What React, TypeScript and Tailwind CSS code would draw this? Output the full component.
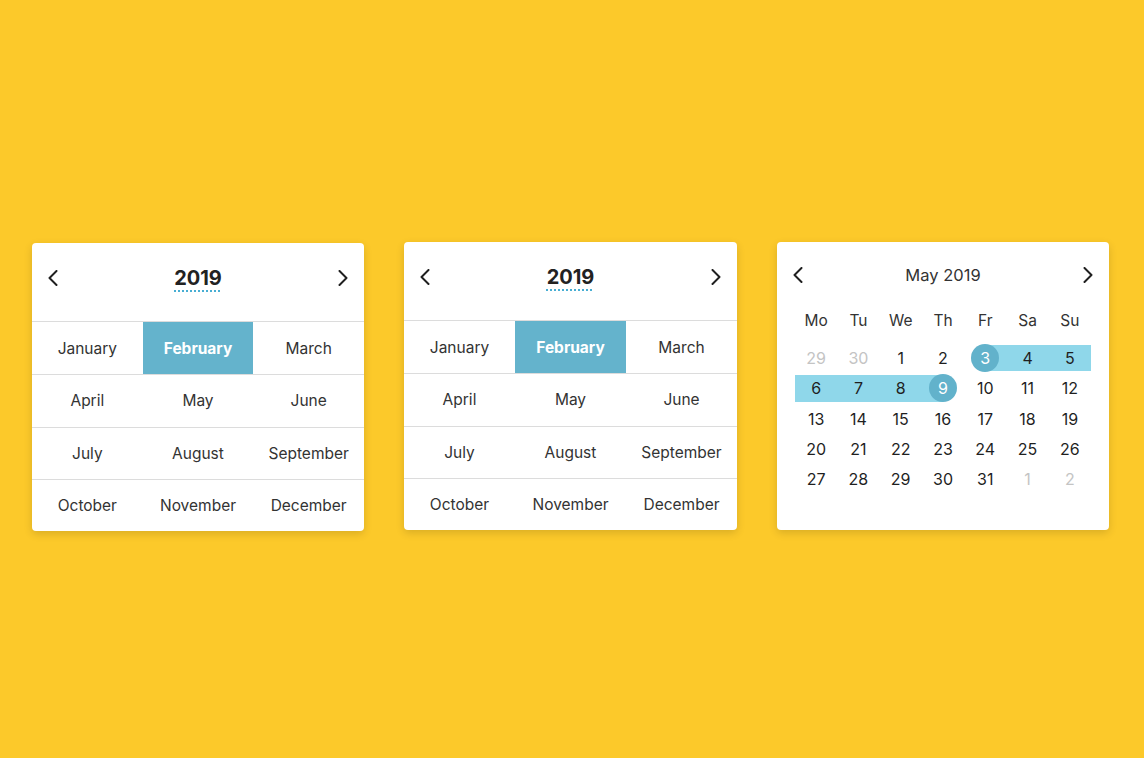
import React from 'react';

const MONTHS = [
    'January', 'February', 'March',
    'April', 'May', 'June',
    'July', 'August', 'September',
    'October', 'November', 'December',
];

const WEEKDAYS = ['Mo', 'Tu', 'We', 'Th', 'Fr', 'Sa', 'Su'];

type Day = { n: number; muted?: boolean };

// May 2019, weeks starting on Monday
const WEEKS: Day[][] = [
    [{ n: 29, muted: true }, { n: 30, muted: true }, { n: 1 }, { n: 2 }, { n: 3 }, { n: 4 }, { n: 5 }],
    [{ n: 6 }, { n: 7 }, { n: 8 }, { n: 9 }, { n: 10 }, { n: 11 }, { n: 12 }],
    [{ n: 13 }, { n: 14 }, { n: 15 }, { n: 16 }, { n: 17 }, { n: 18 }, { n: 19 }],
    [{ n: 20 }, { n: 21 }, { n: 22 }, { n: 23 }, { n: 24 }, { n: 25 }, { n: 26 }],
    [{ n: 27 }, { n: 28 }, { n: 29 }, { n: 30 }, { n: 31 }, { n: 1, muted: true }, { n: 2, muted: true }],
];

const RANGE_START = 3;
const RANGE_END = 9;

const Chevron: React.FC<{ dir: 'left' | 'right' }> = ({ dir }) => (
    <svg width="10" height="16" viewBox="0 0 10 16" fill="none" className="shrink-0">
        <path
            d={dir === 'left' ? 'M8.5 1 L1.5 8 L8.5 15' : 'M1.5 1 L8.5 8 L1.5 15'}
            stroke="#1f1f1f"
            strokeWidth="2"
            strokeLinecap="round"
            strokeLinejoin="round"
        />
    </svg>
);

const Card: React.FC<{ className?: string; children: React.ReactNode }> = ({ className = '', children }) => (
    <div className={`bg-white rounded-[4px] shadow-[0_3px_8px_rgba(0,0,0,0.14)] overflow-hidden ${className}`}>
        {children}
    </div>
);

const MonthPicker: React.FC<{ className?: string }> = ({ className }) => (
    <Card className={className}>
        <div className="h-[79px] pb-[8px] flex items-center justify-between px-[12px] border-b border-[#dcdcdc]">
            <button className="p-1">
                <Chevron dir="left" />
            </button>
            <span className="text-[20px] font-bold text-[#222] leading-none underline decoration-dotted decoration-2 decoration-[#48aed3] underline-offset-[5px]">
                2019
            </span>
            <button className="p-1">
                <Chevron dir="right" />
            </button>
        </div>
        <div className="grid grid-cols-3">
            {MONTHS.map((m, i) => {
                const selected = m === 'February';
                return (
                    <div
                        key={m}
                        className={`h-[52.25px] flex items-center justify-center text-[15.5px] ${
                            i >= 3 ? 'border-t border-[#dcdcdc]' : ''
                        } ${selected ? 'bg-[#64b3cc] text-white font-bold' : 'text-[#333]'}`}
                    >
                        {m}
                    </div>
                );
            })}
        </div>
    </Card>
);

const DayCell: React.FC<{ day: Day }> = ({ day }) => {
    const inMonth = !day.muted;
    const isStart = inMonth && day.n === RANGE_START;
    const isEnd = inMonth && day.n === RANGE_END;
    const inRange = inMonth && day.n > RANGE_START && day.n < RANGE_END;

    return (
        <div className="relative h-[30.3px] flex items-center justify-center">
            {inRange && <div className="absolute inset-x-0 top-[2px] bottom-[2px] bg-[#8fd7ea]" />}
            {isStart && <div className="absolute left-1/2 right-0 top-[2px] bottom-[2px] bg-[#8fd7ea]" />}
            {isEnd && <div className="absolute left-0 right-1/2 top-[2px] bottom-[2px] bg-[#8fd7ea]" />}
            {(isStart || isEnd) && (
                <div className="absolute left-1/2 top-1/2 -translate-x-1/2 -translate-y-1/2 w-[28px] h-[28px] rounded-full bg-[#62b2cb]" />
            )}
            <span
                className={`relative text-[16px] ${
                    isStart || isEnd ? 'text-white' : day.muted ? 'text-[#c4c4c4]' : 'text-[#1f1f1f]'
                }`}
            >
                {day.n}
            </span>
        </div>
    );
};

const DayPicker: React.FC = () => (
    <Card className="w-[332px] px-[18px] pt-[20px] pb-[36px]">
        <div className="h-[26px] flex items-center justify-between -mx-[6px]">
            <button className="p-1">
                <Chevron dir="left" />
            </button>
            <span className="text-[16.5px] text-[#333]">May 2019</span>
            <button className="p-1">
                <Chevron dir="right" />
            </button>
        </div>
        <div className="grid grid-cols-7 mt-[18px] h-[30px] items-center">
            {WEEKDAYS.map((d) => (
                <div key={d} className="text-center text-[15.5px] text-[#333]">
                    {d}
                </div>
            ))}
        </div>
        <div className="mt-[7px] flex flex-col">
            {WEEKS.map((week, wi) => (
                <div key={wi} className="grid grid-cols-7">
                    {week.map((day, di) => (
                        <DayCell key={di} day={day} />
                    ))}
                </div>
            ))}
        </div>
    </Card>
);

export default function App() {
    return (
        <div className="min-h-screen w-full bg-[#fcc92a] font-['Inter',sans-serif] flex items-start gap-[40px] pl-[32px] pt-[242px]">
            <MonthPicker className="w-[332px] mt-px" />
            <MonthPicker className="w-[333px]" />
            <DayPicker />
        </div>
    );
}
